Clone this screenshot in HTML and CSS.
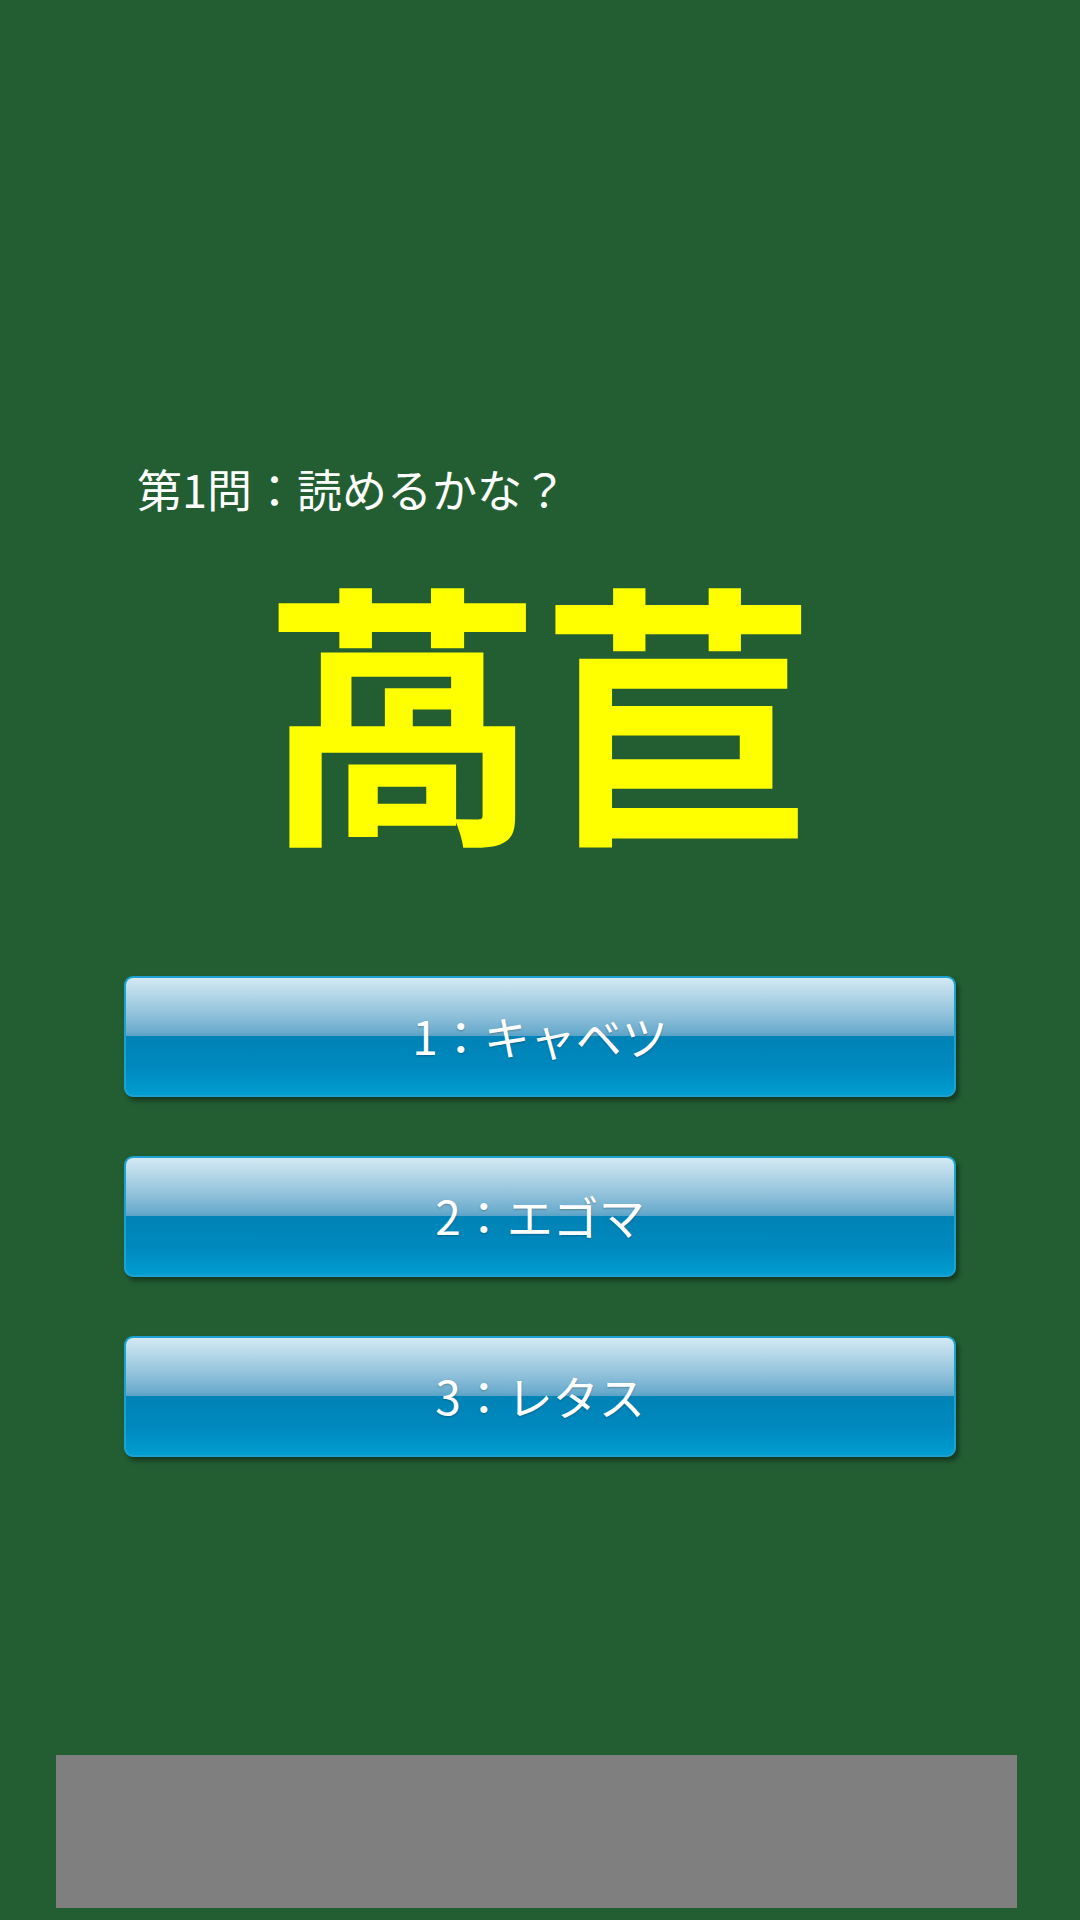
FILE: index.html
```html
<!DOCTYPE html>
<html lang="ja">
<head>
  <meta charset="UTF-8" />
  <meta name="viewport" content="width=device-width, initial-scale=1.0"/>
  <title>読めるかな？</title>
  <link rel="stylesheet" href="styles.css">
</head>
<body>
  <div class="screen">
    <!-- Question -->
    <div class="quiz">
      <p class="question">第1問：読めるかな？</p>
      <div class="word">萵苣</div>

      <!-- Answer buttons -->
      <div class="choices">
        <button class="choice">1：キャベツ</button>
        <button class="choice">2：エゴマ</button>
        <button class="choice">3：レタス</button>
      </div>
    </div>

    <!-- Ad space -->
    <div class="ad-box"></div>
  </div>
</body>
</html>
```

FILE: styles.css
```css
body {
  margin: 0;
  padding: 0;
  background: #235e33;
  font-family: "Noto Sans CJK JP", "Noto Sans", sans-serif;
  color: #fff;
}

.screen {
  height: 1920px;
  display: flex;
  flex-direction: column;
}

.quiz {
  padding-top: 466px;
  display: flex;
  flex-direction: column;
}

.question {
  margin: 0 0 0 137px;
  font-size: 45px;
  line-height: 1;
  font-weight: 400;
}

.word {
  margin-top: 54px;
  font-size: 276px;
  line-height: 1;
  font-weight: 700;
  color: #ffff00;
  text-align: center;
}

.choices {
  margin: 135px 0 0 124px;
  display: flex;
  flex-direction: column;
  gap: 59px;
}

.choice {
  width: 832px;
  height: 121px;
  border: 2px solid #1ba2d2;
  border-radius: 9px;
  background: linear-gradient(to bottom,
    #d3e9f4 0%,
    #b3d6e7 15%,
    #8fc0da 32%,
    #6aaccd 46%,
    #5aa2c8 49.5%,
    #0083b7 50%,
    #0088bd 75%,
    #009dd0 100%);
  box-shadow: 3px 4px 5px rgba(0, 0, 0, 0.4);
  color: #fff;
  font-family: "Noto Sans CJK JP", "Noto Sans", sans-serif;
  font-size: 46px;
  text-shadow: 0 1px 2px rgba(0, 0, 0, 0.25);
  padding: 0 0 4px;
  cursor: pointer;
}

.ad-box {
  margin: auto 63px 12px 56px;
  height: 153px;
  background: #807f80;
}
```
